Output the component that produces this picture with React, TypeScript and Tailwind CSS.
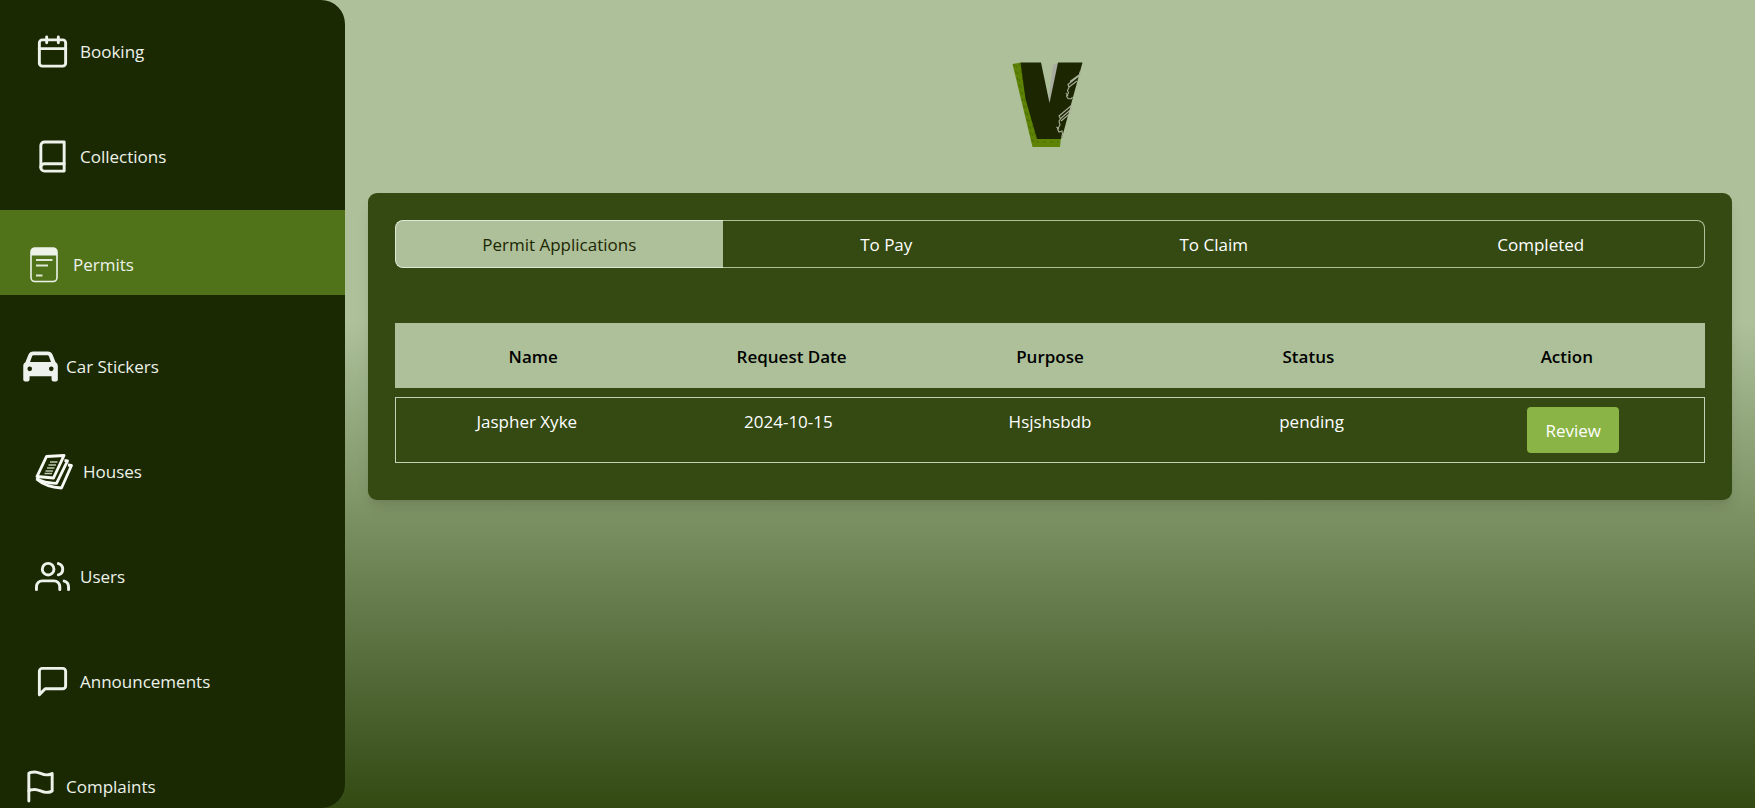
import type { ReactNode } from "react";
import { FiBook, FiCalendar, FiFlag, FiMessageSquare, FiUsers } from "react-icons/fi";

function PermitIcon() {
  return (
    <svg width="28" height="36" viewBox="0 0 28 36" fill="none" aria-hidden="true">
      <rect x="1" y="1" width="26" height="33.500" rx="4" stroke="#eef3ea" strokeWidth="1.6" />
      <path d="M1 8.500V5a4 4 0 0 1 4-4h18a4 4 0 0 1 4 4v3.500z" fill="#eef3ea" />
      <path d="M6 13h16.500M6 18.500h12M6 28.500h6.500" stroke="#dfe8d2" strokeWidth="1.900" />
    </svg>
  );
}

function CarIcon() {
  return (
    <svg width="35" height="31" viewBox="0 0 36 32" fill="#edf2ed" aria-hidden="true">
      <path
        fillRule="evenodd"
        d="M10.500 0.500h15c2.300 0 4 1.100 4.900 3.200L33.600 11.500c1.500.9 2.300 2.200 2.300 4v14a2 2 0 0 1-2 2h-2.500a2 2 0 0 1-2-2V26H6.700v3.500a2 2 0 0 1-2 2H2.200a2 2 0 0 1-2-2v-14c0-1.800.7-3.100 2.200-4L5.600 3.700C6.500 1.600 8.200.5 10.500.5zM10.800 4.500c-.8 0-1.200.3-1.500 1L7.200 11.300h21.600L26.700 5.500c-.3-.7-.7-1-1.500-1zM6.900 16a2.400 2.400 0 1 0 0 4.800 2.400 2.400 0 0 0 0-4.800zm22.200 0a2.400 2.400 0 1 0 0 4.800 2.400 2.400 0 0 0 0-4.800z"
      />
    </svg>
  );
}

function PapersIcon() {
  return (
    <svg width="38" height="36" viewBox="0 0 38 36" fill="none" aria-hidden="true">
      <g stroke="#f7faf4" strokeLinejoin="round">
        <path d="M11.500 2.500 29 1.500 18.500 24 2 22.500z" strokeWidth="2.900" />
        <path d="M1.500 24C7 28.500 13 28.800 21.500 29.300L32.500 6.800 29.500 6.500" strokeWidth="2.800" />
        <path d="M1.500 25C9 31.500 16 33.500 26.500 34L36.500 11.500 33 11" strokeWidth="2.800" />
      </g>
      <path
        d="M15 8h7.500M13.500 11h7.500M12 14h7.500M10.500 17h7.500M9.500 19.500H17"
        stroke="#bcc7b0"
        strokeWidth="1.600"
      />
    </svg>
  );
}

function Logo() {
  return (
    <svg width="71" height="86" viewBox="0 0 71 86" fill="none" role="img" aria-label="V">
      <path d="M36 40 41 3l5-2h3L38 42z" fill="#a9aca0" />
      <path d="M0.500 2 9 0.500 27 76l22-1-1 10H20.500z" fill="#5f8405" />
      <path d="M4 3 22 80M2 2l19 80M7 1.500 23 74M24 80h23" stroke="#4c6b05" strokeWidth="0.900" strokeDasharray="3 4" />
      <path d="M8.500 0.500H29L37.500 41 46 .5h24.500L50 75.500l-1.500 1.500H25L13.500 37z" fill="#1c2702" />
      <path
        d="M68.500 9 67 14 56 22.500l1 3-1.500 3 1 2.500-2 3 1.500 2.500 3 .5 1.500-2M67 13 58 19.500M65 19l-8 6M60 43 47 54l1.500 3-1.500 2 1 4-2.500 4 1.500 3 3-1 .5 3-1 3.500M60 46.500 48 57M58.500 51 49 59M54 31l2 3M44.500 65l2.500 2"
        stroke="#a9b09a"
        strokeWidth="1.100"
      />
    </svg>
  );
}

type Item = { label: string; icon: ReactNode; inset: string; active?: boolean };

const items: Item[] = [
  { label: "Booking", icon: <FiCalendar size={35} />, inset: "pl-[35px] gap-2.5" },
  { label: "Collections", icon: <FiBook size={35} />, inset: "pl-[35px] gap-2.5" },
  { label: "Permits", icon: <PermitIcon />, inset: "pl-[30px] gap-[15px]", active: true },
  { label: "Car Stickers", icon: <CarIcon />, inset: "pl-[23px] gap-2" },
  { label: "Houses", icon: <PapersIcon />, inset: "pl-[35px] gap-2.5" },
  { label: "Users", icon: <FiUsers size={35} />, inset: "pl-[35px] gap-2.5" },
  { label: "Announcements", icon: <FiMessageSquare size={35} />, inset: "pl-[35px] gap-2.5" },
  { label: "Complaints", icon: <FiFlag size={35} />, inset: "pl-[23px] gap-2" },
];

const tabs = ["Permit Applications", "To Pay", "To Claim", "Completed"];
const columns = ["Name", "Request Date", "Purpose", "Status", "Action"];
const rows = [{ name: "Jaspher Xyke", date: "2024-10-15", purpose: "Hsjshsbdb", status: "pending" }];

export default function App() {
  return (
    <div className="flex h-screen overflow-hidden bg-linear-to-b from-[#adc09a] from-40% via-[#7a8f61] via-65% to-[#334a12] font-['Open_Sans',sans-serif] text-[17px] leading-7">
      <nav className="h-full w-[345px] shrink-0 overflow-hidden rounded-r-3xl bg-[#1b2903]">
        <ul className="flex flex-col gap-5">
          {items.map((item) => (
            <li key={item.label}>
              <a
                href="#"
                aria-current={item.active ? "page" : undefined}
                className={`flex h-[85px] items-center text-[#edf2ea] ${item.inset} ${
                  item.active ? "bg-[#50731a] pt-6" : "pt-[18px]"
                }`}
              >
                {item.icon}
                <span>{item.label}</span>
              </a>
            </li>
          ))}
        </ul>
      </nav>

      <main className="flex min-w-0 flex-1 flex-col px-[23px]">
        <header className="flex justify-center pt-[62px] pr-1.5 pb-[45px]">
          <Logo />
        </header>

        <section className="rounded-[9px] bg-[#344a12] px-[27px] pt-[27px] pb-[37px] shadow-lg">
          <div className="grid grid-cols-4" role="tablist">
            {tabs.map((tab, i) => (
              <button
                key={tab}
                type="button"
                role="tab"
                aria-selected={i === 0}
                className={`h-12 border-y pt-px first:rounded-l-lg first:border-l last:rounded-r-lg last:border-r ${
                  i === 0 ? "border-[#dfe7d6] bg-[#adc09a] text-[#1c2702]" : "border-[#adc09a] font-medium text-white"
                }`}
              >
                {tab}
              </button>
            ))}
          </div>

          <table className="mt-[55px] block w-full text-center">
            <thead className="block">
              <tr className="grid grid-cols-5 bg-[#adc09a] px-[9px] pt-5 pb-[17px] text-black">
                {columns.map((c) => (
                  <th key={c} scope="col" className="font-semibold">
                    {c}
                  </th>
                ))}
              </tr>
            </thead>
            <tbody className="mt-[9px] block">
              {rows.map((r) => (
                <tr key={r.name} className="grid grid-cols-5 border border-[#c5d2b8] py-[9px] font-medium text-white">
                  <td className="pt-px">{r.name}</td>
                  <td className="pt-px">{r.date}</td>
                  <td className="pt-px">{r.purpose}</td>
                  <td className="pt-px">{r.status}</td>
                  <td>
                    <button type="button" className="mx-auto block rounded bg-[#8ab446] px-[18px] pt-2.5 pb-2 font-medium">
                      Review
                    </button>
                  </td>
                </tr>
              ))}
            </tbody>
          </table>
        </section>
      </main>
    </div>
  );
}
